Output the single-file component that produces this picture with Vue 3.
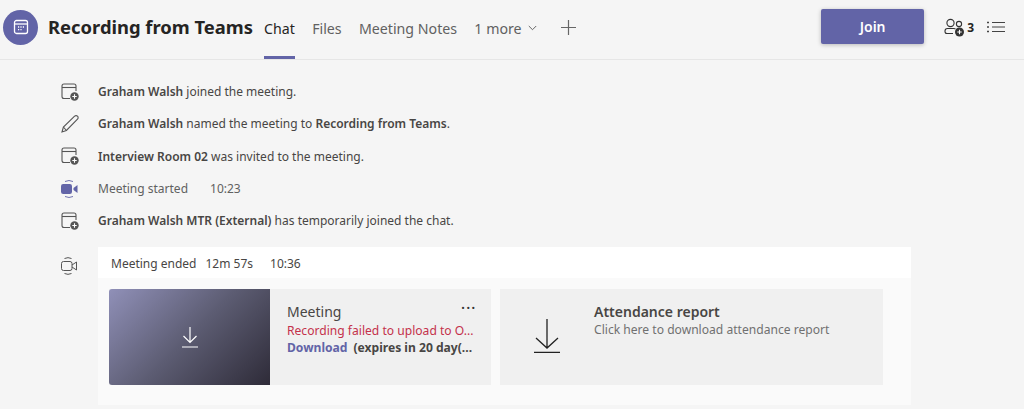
<script setup>
const rows = [
  { icon: 'add', parts: [['Graham Walsh', true], [' joined the meeting.', false]] },
  { icon: 'pen', parts: [['Graham Walsh', true], [' named the meeting to ', false], ['Recording from Teams', true], ['.', false]] },
  { icon: 'add', parts: [['Interview Room 02', true], [' was invited to the meeting.', false]] },
  { icon: 'start', parts: [] },
  { icon: 'add', parts: [['Graham Walsh MTR (External)', true], [' has temporarily joined the chat.', false]] }
]
const tabs = ['Files', 'Meeting Notes']
</script>

<template>
  <div class="page">
    <header class="topbar">
      <div class="avatar">
        <svg width="18" height="18" viewBox="0 0 18 18" fill="none" stroke="#fff">
          <rect x="2.500" y="2.500" width="13" height="13" rx="2" stroke-width="1.300" />
          <path d="M2.500 6h13" stroke-width="1.300" />
          <path d="M6 9h1.200M8.400 9h1.200M10.800 9h1.200M6 11.600h1.200M8.400 11.600h1.200" stroke-width="1.400" />
        </svg>
      </div>
      <h1 class="title">Recording from Teams</h1>
      <nav class="tabs">
        <span class="tab active">Chat</span>
        <span v-for="t in tabs" :key="t" class="tab">{{ t }}</span>
        <span class="tab more">1 more
          <svg width="9" height="6" viewBox="0 0 9 6" fill="none" stroke="#666" stroke-width="1"><path d="M.8 1l3.700 3.700L8.200 1" /></svg>
        </span>
        <svg class="plus" width="15" height="15" viewBox="0 0 15 15" stroke="#666" stroke-width="1.200"><path d="M7.500 0v15M0 7.500h15" /></svg>
      </nav>
      <button class="join" type="button">Join</button>
      <div class="people">
        <svg width="22" height="20" viewBox="0 0 22 20" fill="none" stroke="#333" stroke-width="1.100">
          <circle cx="6.500" cy="5" r="3.600" />
          <circle cx="15" cy="6" r="2.600" />
          <path d="M9 15.500H3a2 2 0 0 1-2-2v-.5a2.500 2.500 0 0 1 2.500-2.500h6.500a2.500 2.500 0 0 1 1.500.5" />
          <circle cx="15.500" cy="14" r="4.500" fill="#333" stroke="none" />
          <path d="M15.500 11.800v4.400M13.300 14h4.400" stroke="#fff" />
        </svg>
        <b>3</b>
      </div>
      <svg class="list" width="18" height="14" viewBox="0 0 18 14" stroke="#444" stroke-width="1">
        <path d="M5 2.500h13M5 7h13M5 11.500h13" />
        <path d="M0 2.500h2M0 7h2M0 11.500h2" stroke-width="1.400" />
      </svg>
    </header>

    <main class="feed">
      <div v-for="(row, i) in rows" :key="i" class="row">
        <div class="row-icon">
          <svg v-if="row.icon === 'add'" width="20" height="20" viewBox="0 0 20 20" fill="none" stroke="#555" stroke-width="1.100">
            <path d="M10 16.500H4a2 2 0 0 1-2-2V4a2 2 0 0 1 2-2h10a2 2 0 0 1 2 2v5" />
            <path d="M2 5.500h14" />
            <circle cx="14.500" cy="14.500" r="4.200" fill="#555" stroke="none" />
            <path d="M14.500 12.300v4.400M12.300 14.500h4.400" stroke="#fff" />
          </svg>
          <svg v-else-if="row.icon === 'pen'" width="20" height="20" viewBox="0 0 20 20" fill="none" stroke="#555" stroke-width="1.100">
            <path d="M2 18l1.400-5L14.600 2.200a2 2 0 0 1 2.900 0 2 2 0 0 1 0 2.900L6.400 16.500z" />
            <path d="M3.400 13l3 3.500" />
          </svg>
          <svg v-else width="20" height="20" viewBox="0 0 20 20">
            <rect x="1" y="5" width="11" height="10" rx="2.200" fill="#6264a7" />
            <path d="M13.500 9l4-3v8l-4-3z" fill="#6264a7" />
            <path d="M5 2.500a9 9 0 0 1 8 0M5 17.500a9 9 0 0 0 8 0" fill="none" stroke="#6264a7" stroke-width=".9" />
          </svg>
        </div>
        <p v-if="row.icon !== 'start'" class="row-text">
          <template v-for="(p, j) in row.parts" :key="j"><b v-if="p[1]">{{ p[0] }}</b><template v-else>{{ p[0] }}</template></template>
        </p>
        <p v-else class="row-text started"><span>Meeting started</span><span>10:23</span></p>
      </div>

      <div class="ended">
        <div class="row-icon ended-icon">
          <svg width="20" height="20" viewBox="0 0 20 20" fill="none" stroke="#555" stroke-width="1">
            <rect x="1.500" y="5.500" width="10.500" height="9" rx="2" />
            <path d="M12 9l4.500-3v8L12 11" />
            <path d="M4.500 2.500a8 8 0 0 1 7 0M4.500 17.500a8 8 0 0 0 7 0" />
          </svg>
        </div>
        <section class="panel">
          <div class="panel-head">
            <span>Meeting ended</span><span class="dur">12m 57s</span><span class="end-time">10:36</span>
          </div>
          <div class="cards">
            <article class="card">
              <div class="thumb">
                <svg width="18" height="22" viewBox="0 0 18 22" fill="none" stroke="#fff" stroke-width="1.200">
                  <path d="M9 1v15M2.500 10L9 16.500 15.500 10M1 21h16" />
                </svg>
              </div>
              <div class="card-info">
                <div class="card-name">Meeting</div>
                <span class="dots">···</span>
                <div class="failed">Recording failed to upload to O...</div>
                <div class="dl"><b class="dl-link">Download</b><b class="expires">(expires in 20 day(...</b></div>
              </div>
            </article>
            <article class="card report">
              <div class="report-icon">
                <svg width="26" height="34" viewBox="0 0 26 34" fill="none" stroke="#222" stroke-width="1.300">
                  <path d="M13 0v29M2 19l11 10 11-10M0 33.300h26" />
                </svg>
              </div>
              <div class="report-info">
                <div class="report-name">Attendance report</div>
                <div class="report-sub">Click here to download attendance report</div>
              </div>
            </article>
          </div>
        </section>
      </div>
    </main>
  </div>
</template>

<style>
html, body {
  margin: 0;
  background: #f5f5f5;
}
</style>

<style scoped>
.page {
  width: 1024px;
  height: 409px;
  overflow: hidden;
  background: #f5f5f5;
  font-family: "Noto Sans", "Open Sans", sans-serif;
  color: #252423;
}

.topbar {
  display: flex;
  align-items: center;
  height: 59px;
  border-bottom: 1px solid #e6e6e6;
  padding-left: 3px;
}

.avatar {
  display: flex;
  align-items: center;
  justify-content: center;
  width: 35px;
  height: 35px;
  border-radius: 50%;
  background: #6264a7;
  margin-right: 10px;
  margin-top: -5px;
}

.title {
  margin: -6px 11px 0 0;
  font-size: 18.400px;
  font-weight: 700;
  white-space: nowrap;
}

.tabs {
  display: flex;
  align-items: center;
  align-self: stretch;
  gap: 17.300px;
  font-size: 14.200px;
  color: #616161;
}

.tab {
  display: flex;
  align-items: center;
  gap: 6px;
  height: 59px;
  box-sizing: border-box;
  padding-bottom: 3px;
  white-space: nowrap;
}

.tab.active {
  color: #252423;
  border-bottom: 3px solid #6264a7;
  padding-bottom: 0;
}

.plus {
  margin-left: 7px;
  margin-top: -5px;
}

.join {
  margin-left: auto;
  width: 103px;
  height: 35px;
  margin-top: -6px;
  border: 0;
  border-radius: 2px;
  background: #6264a7;
  color: #fff;
  font: 600 14px "Noto Sans", sans-serif;
  box-shadow: 0 1px 4px rgba(0, 0, 0, 0.25);
}

.people {
  display: flex;
  align-items: center;
  gap: 1px;
  margin-left: 20px;
  margin-top: -4px;
  font-size: 12px;
}

.list {
  margin-left: 13px;
  margin-right: 19px;
  margin-top: -5px;
}

.feed {
  padding: 15.500px 0 0 60px;
}

.row {
  display: flex;
  align-items: center;
  height: 32.300px;
}

.row-icon {
  width: 38px;
  flex: none;
  display: flex;
}

.row-text {
  margin: 0;
  font-size: 12px;
  color: #484644;
  white-space: nowrap;
}

.row-text b {
  font-weight: 600;
}

.started {
  display: flex;
  gap: 22px;
  color: #616161;
}

.ended {
  display: flex;
  margin-top: 10px;
}

.ended-icon {
  padding-top: 9px;
}

.panel {
  width: 813px;
  height: 158px;
  background: #fafafa;
}

.panel-head {
  display: flex;
  align-items: center;
  box-sizing: border-box;
  height: 31px;
  padding: 3px 0 0 13px;
  background: #fff;
  font-size: 12px;
  color: #484644;
}

.dur {
  margin-left: 9px;
}

.end-time {
  margin-left: 17px;
}

.cards {
  display: flex;
  gap: 9px;
  padding: 11px 0 0 11px;
}

.card {
  display: flex;
  width: 382px;
  height: 96px;
  background: #f0f0f0;
}

.thumb {
  display: flex;
  flex: none;
  align-items: center;
  justify-content: center;
  width: 161px;
  border-radius: 3px 0 0 3px;
  background: linear-gradient(135deg, #9090b8, #5c5c72 50%, #2e2b38);
}

.card-info {
  position: relative;
  flex: 1;
  padding: 13px 0 0 17px;
  font-size: 12.100px;
}

.card-name {
  font-size: 14px;
  line-height: 19px;
  color: #484644;
}

.dots {
  position: absolute;
  top: 11px;
  right: 15px;
  font-size: 17px;
  line-height: 16px;
  letter-spacing: 0.500px;
  color: #333;
}

.failed {
  line-height: 17px;
  padding-top: 1px;
  color: #c4314b;
  white-space: nowrap;
}

.dl {
  display: flex;
  gap: 6px;
  line-height: 17px;
  white-space: nowrap;
}

.dl-link {
  color: #6264a7;
}

.expires {
  color: #484644;
}

.report {
  width: 383px;
}

.report-icon {
  flex: none;
  width: 94px;
  padding: 30px 0 0 34px;
  box-sizing: border-box;
}

.report-info {
  padding-top: 14px;
}

.report-name {
  font-size: 14px;
  font-weight: 600;
  line-height: 18px;
  color: #484644;
}

.report-sub {
  font-size: 12.100px;
  line-height: 18px;
  color: #707070;
}
</style>
